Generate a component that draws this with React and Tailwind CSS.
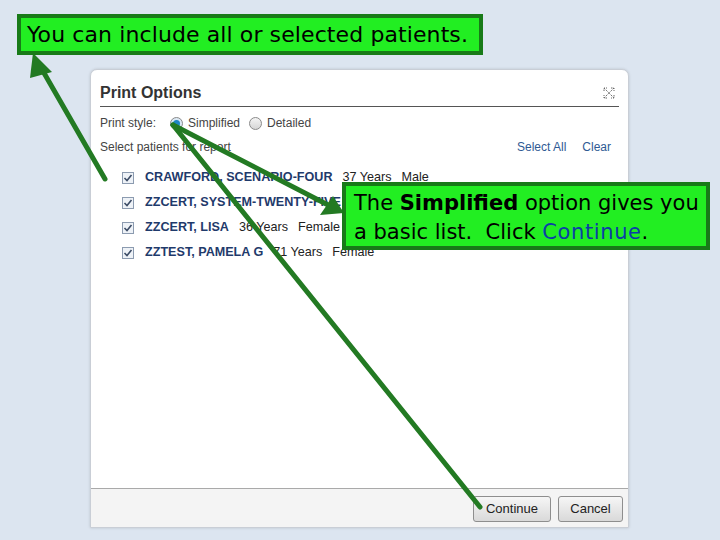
import React from 'react';

const patients = [
  { name: 'CRAWFORD, SCENARIO-FOUR', age: '37 Years', sex: 'Male' },
  { name: 'ZZCERT, SYSTEM-TWENTY-FIVE', age: '25 Years', sex: 'Male' },
  { name: 'ZZCERT, LISA', age: '36 Years', sex: 'Female' },
  { name: 'ZZTEST, PAMELA G', age: '71 Years', sex: 'Female' },
];

const Check = () => (
  <span className="w-[12px] h-[12px] border border-[#8c9bb0] bg-[#eef2f7] flex items-center justify-center shrink-0">
    <svg width="10" height="10" viewBox="0 0 10 10">
      <path d="M1.5 5 L4 7.5 L8.5 2" fill="none" stroke="#3c4c66" strokeWidth="1.6" />
    </svg>
  </span>
);

const Radio = ({ on }) => (
  <span className={`w-[13px] h-[13px] rounded-full border border-[#8a8a8a] flex items-center justify-center shrink-0 ${on ? 'bg-[#dbe9f5]' : 'bg-gradient-to-b from-[#f4f4f4] to-[#d6d6d6]'}`}>
    {on && <span className="w-[7px] h-[7px] rounded-full bg-[#1f86c4]" />}
  </span>
);

const Arrows = () => (
  <svg className="absolute inset-0 pointer-events-none" width="720" height="540" viewBox="0 0 720 540">
    <g stroke="#237a23" strokeWidth="5" strokeLinecap="round" fill="none">
      <line x1="105" y1="179" x2="40" y2="66" />
      <line x1="173" y1="125" x2="332" y2="207" />
      <line x1="173" y1="125" x2="480" y2="507" />
    </g>
    <g fill="#237a23">
      <polygon points="33,53 52,72 30,78" />
      <polygon points="344,213 320,215 333,196" />
    </g>
  </svg>
);

export default function App() {
  return (
    <div className="relative w-[720px] h-[540px] bg-[#dce5f0] overflow-hidden" style={{ fontFamily: '"Liberation Sans", Arial, sans-serif' }}>
      <div className="pt-[69px] pl-[90px]">
        <div className="w-[539px] h-[459px] bg-white rounded-t-[7px] border border-[#c9ced6] shadow-[0_0_3px_rgba(0,0,0,0.15)] flex flex-col">
          <div className="flex-1 px-[9px] pt-[11px]">
            <div className="flex items-center justify-between h-[26px] border-b border-[#555] pb-[2px]">
              <span className="text-[16px] font-bold text-[#333]">Print Options</span>
              <svg width="12" height="12" viewBox="0 0 12 12" className="mr-[4px]">
                <g stroke="#666" strokeWidth="1" fill="none" strokeDasharray="1.5 1">
                  <path d="M1 1 L11 11 M11 1 L1 11" />
                  <path d="M1 4 V1 H4 M8 1 H11 V4 M11 8 V11 H8 M4 11 H1 V8" />
                </g>
              </svg>
            </div>
            <div className="flex items-center h-[24px] mt-[4px] text-[12px] text-[#444]">
              <span className="w-[70px]">Print style:</span>
              <Radio on />
              <span className="ml-[5px]">Simplified</span>
              <span className="ml-[9px]"><Radio /></span>
              <span className="ml-[5px]">Detailed</span>
            </div>
            <div className="flex items-center justify-between h-[24px] text-[12px]">
              <span className="text-[#444]">Select patients for report</span>
              <span className="flex gap-[16px] mr-[8px] text-[#2f5a94]">
                <span>Select All</span>
                <span>Clear</span>
              </span>
            </div>
            <div className="flex flex-col mt-[6px] pl-[22px]">
              {patients.map((p) => (
                <div key={p.name} className="flex items-center h-[25px] text-[12.6px]">
                  <Check />
                  <span className="ml-[11px] font-bold text-[#1f3a6b]">{p.name}</span>
                  <span className="ml-[10px] text-[#222]">{p.age}</span>
                  <span className="ml-[10px] text-[#222]">{p.sex}</span>
                </div>
              ))}
            </div>
          </div>
          <div className="h-[39px] bg-[#f4f4f4] border-t border-[#a9a9a9] flex items-center justify-end gap-[7px] pr-[5px] pt-[2px]">
            <button className="w-[78px] h-[26px] rounded-[3px] border border-[#8e8e8e] bg-gradient-to-b from-[#f6f6f6] to-[#d9d9d9] text-[13px] text-[#222]">Continue</button>
            <button className="w-[65px] h-[26px] rounded-[3px] border border-[#8e8e8e] bg-gradient-to-b from-[#f6f6f6] to-[#d9d9d9] text-[13px] text-[#222]">Cancel</button>
          </div>
        </div>
      </div>

      <Arrows />

      <div className="absolute left-[17px] top-[14px] w-[466px] h-[41px] bg-[#22ee22] border-[4px] border-[#187a18] flex items-center pl-[6px] text-[22px] tracking-[0.1px] text-black" style={{ fontFamily: '"DejaVu Sans", sans-serif' }}>
        You can include all or selected patients.
      </div>

      <div className="absolute left-[342px] top-[182px] w-[368px] h-[68px] bg-[#22ee22] border-[4px] border-[#187a18] flex flex-col justify-center pl-[8px] pt-[3px] text-[21px] leading-[29px] text-black" style={{ fontFamily: '"DejaVu Sans", sans-serif' }}>
        <span>The <b>Simplified</b> option gives you</span>
        <span>a basic list.&nbsp; Click <span className="text-[#0b3ea8] tracking-[0.6px]">Continue</span>.</span>
      </div>
    </div>
  );
}
